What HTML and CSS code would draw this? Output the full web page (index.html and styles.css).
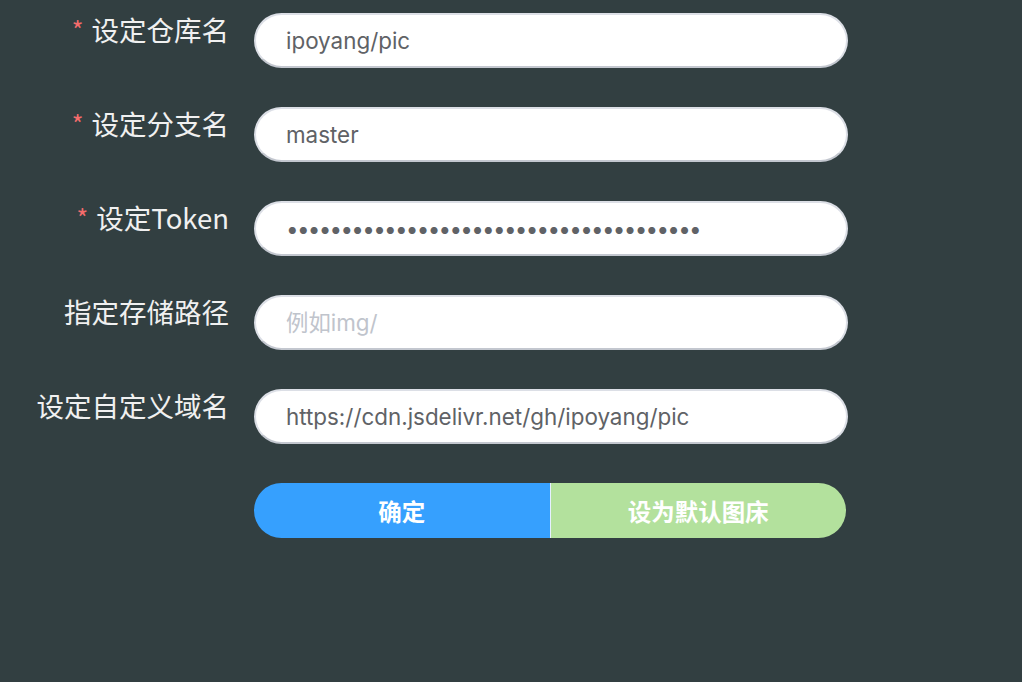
FILE: index.html
```html
<!DOCTYPE html>
<html lang="zh-CN">
<head>
<meta charset="utf-8">
<title>GitHub 图床设置</title>
<link rel="stylesheet" href="styles.css">
</head>
<body>
<form class="form">
  <div class="row">
    <label class="label"><span class="req">*</span>设定仓库名</label>
    <input class="input" type="text" value="ipoyang/pic">
  </div>
  <div class="row">
    <label class="label"><span class="req">*</span>设定分支名</label>
    <input class="input" type="text" value="master">
  </div>
  <div class="row">
    <label class="label"><span class="req">*</span>设定Token</label>
    <input class="input" type="password" value="abcdefghijklmnopqrstuvwxyz0123456789AB">
  </div>
  <div class="row">
    <label class="label">指定存储路径</label>
    <input class="input" type="text" placeholder="例如img/">
  </div>
  <div class="row">
    <label class="label">设定自定义域名</label>
    <input class="input" type="text" value="https://cdn.jsdelivr.net/gh/ipoyang/pic">
  </div>
  <div class="row">
    <div class="label"></div>
    <div class="btn-group">
      <button type="button" class="btn btn-primary">确定</button>
      <button type="button" class="btn btn-success">设为默认图床</button>
    </div>
  </div>
</form>
</body>
</html>
```

FILE: styles.css
```css
html, body {
  margin: 0;
  padding: 0;
  background: #323f41;
  height: 100%;
}
body {
  font-family: Inter, "Noto Sans CJK SC", sans-serif;
}
.form {
  padding-top: 13px;
  display: flex;
  flex-direction: column;
  gap: 39px;
}
.row {
  display: flex;
  align-items: flex-start;
  gap: 25px;
}
.label {
  width: 229px;
  flex: none;
  text-align: right;
  font-family: "Noto Sans CJK SC", sans-serif;
  font-size: 27.5px;
  line-height: 30px;
  color: #f0f0f0;
  padding-top: 1px;
}
.req {
  color: #f56c6c;
  font-size: 25px;
  margin-right: 8px;
  vertical-align: 1px;
}
.input {
  box-sizing: border-box;
  width: 594px;
  height: 55px;
  border: 2px solid #dcdfe6;
  border-bottom-color: #c3c7cf;
  border-radius: 28px;
  background: #fff;
  padding: 0 20px 0 30px;
  font-family: Inter, "Noto Sans CJK SC", sans-serif;
  font-size: 22.4px;
  color: #606266;
  outline: none;
  margin: 0;
}
.input::placeholder {
  color: #c0c4cc;
}
.input[type="password"] {
  letter-spacing: -1.7px;
}
.btn-group {
  display: flex;
  width: 592px;
  height: 55px;
  border-radius: 28px;
  overflow: hidden;
}
.btn {
  flex: 1;
  border: none;
  margin: 0;
  padding: 0;
  color: #fff;
  font-family: "Noto Sans CJK SC", sans-serif;
  font-weight: bold;
  font-size: 23.5px;
}
.btn-primary {
  background: #36a0fe;
  border-right: 1px solid #e6f0ff;
}
.btn-success {
  background: #b3e19d;
}
```
